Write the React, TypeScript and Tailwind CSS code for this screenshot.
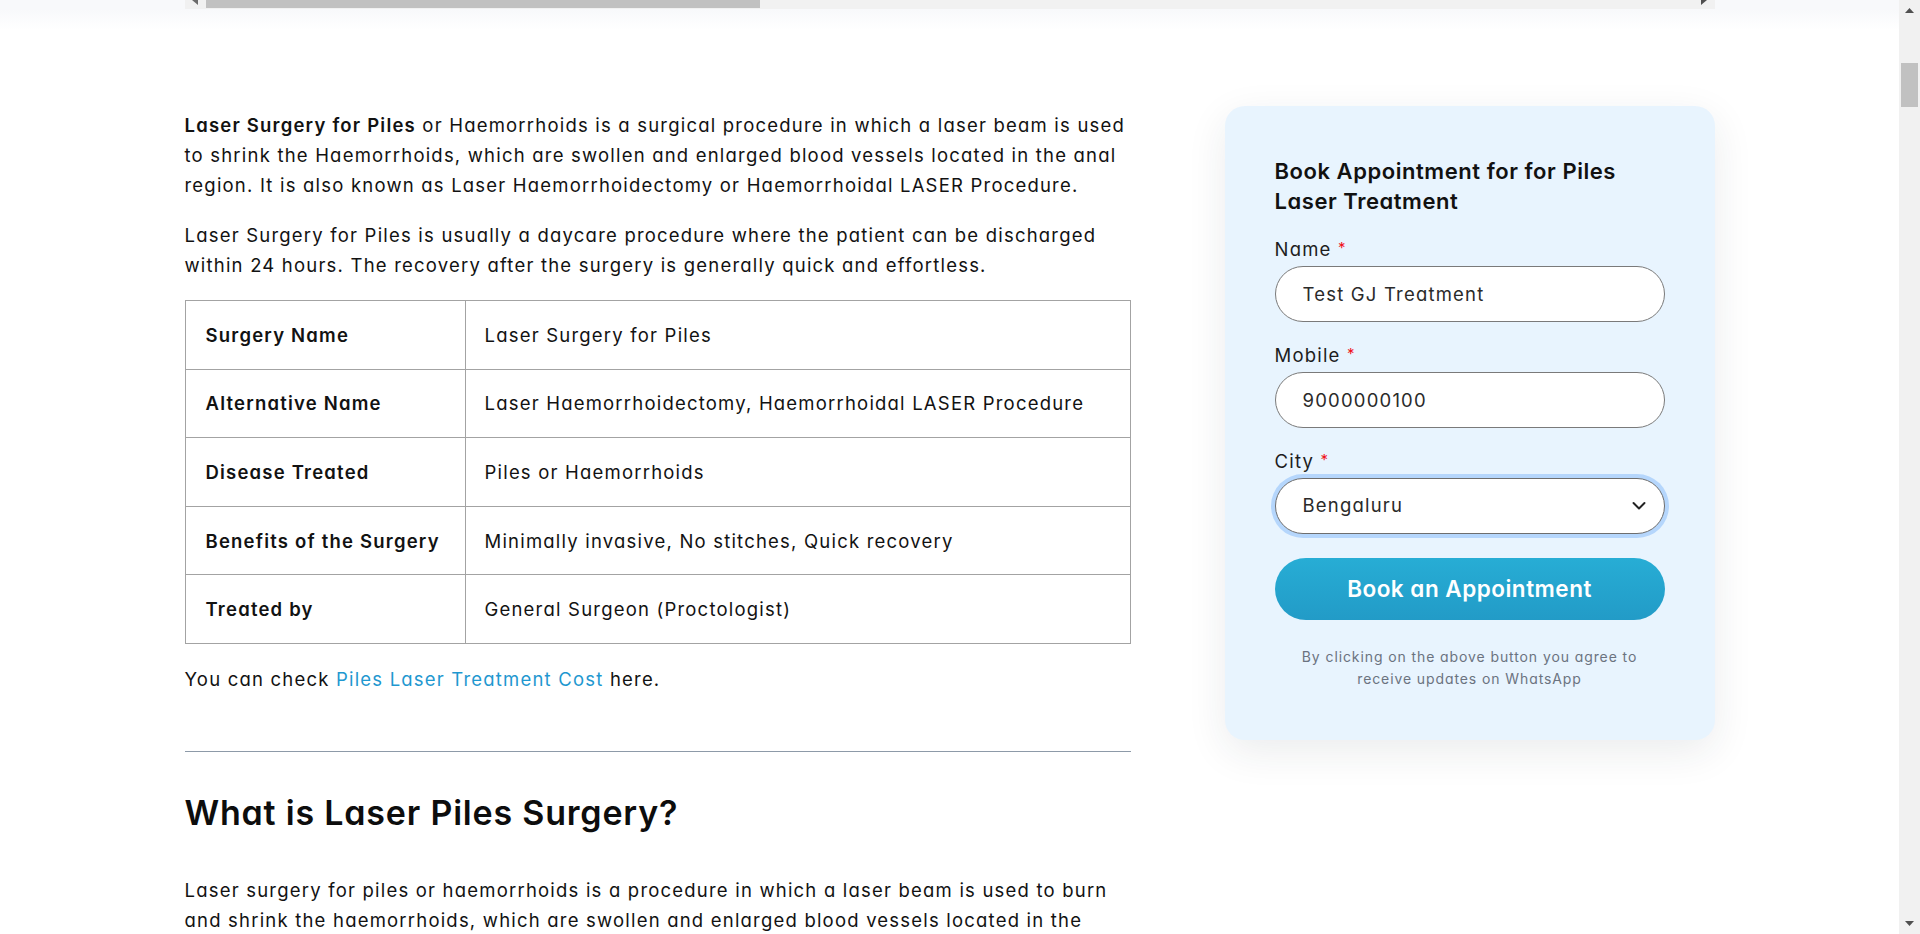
const rows = [
  { label: "Surgery Name", value: "Laser Surgery for Piles" },
  { label: "Alternative Name", value: "Laser Haemorrhoidectomy, Haemorrhoidal LASER Procedure" },
  { label: "Disease Treated", value: "Piles or Haemorrhoids" },
  { label: "Benefits of the Surgery", value: "Minimally invasive, No stitches, Quick recovery" },
  { label: "Treated by", value: "General Surgeon (Proctologist)" },
];

function TopScroller() {
  return (
    <div className="h-[10px] shrink-0 bg-[#f8f9fb]">
      <div className="w-[1530px] mx-auto h-[9px] bg-[#f1f1f1] flex items-start">
        <div className="w-[21px] h-[9px] flex items-start justify-center">
          <svg width="6" height="5" viewBox="0 0 6 5">
            <path d="M0 0 L6 0 L6 5 Z" fill="#6b6b6b" />
          </svg>
        </div>
        <div className="w-[554px] h-[8px] bg-[#c1c1c1]" />
        <div className="flex-1" />
        <div className="w-[21px] h-[9px] flex items-start justify-center">
          <svg width="6" height="5" viewBox="0 0 6 5">
            <path d="M0 0 L6 0 L0 5 Z" fill="#505050" />
          </svg>
        </div>
      </div>
    </div>
  );
}

function PageScrollbar() {
  return (
    <div className="w-[21px] h-screen bg-[#f1f1f1] flex flex-col items-center shrink-0">
      <div className="h-[21px] w-full flex items-center justify-center">
        <svg width="9" height="5" viewBox="0 0 9 5">
          <path d="M4.5 0 L9 5 L0 5 Z" fill="#505050" />
        </svg>
      </div>
      <div className="mt-[42px] w-[17px] h-[44px] bg-[#c1c1c1]" />
      <div className="flex-1" />
      <div className="h-[21px] w-full flex items-center justify-center">
        <svg width="9" height="5" viewBox="0 0 9 5">
          <path d="M0 0 L9 0 L4.5 5 Z" fill="#505050" />
        </svg>
      </div>
    </div>
  );
}

function Field({ label, children }: { label: string; children: React.ReactNode }) {
  return (
    <div className="mt-[20px]">
      <label className="block text-[18.5px] leading-[26px] tracking-[1.2px] text-[#1d1d1d] mb-[2px]">
        {label} <span className="text-[#f0121b] text-[15px] relative top-[-3px]">*</span>
      </label>
      {children}
    </div>
  );
}

function BookingCard() {
  return (
    <div className="w-[490px] mt-[76px] bg-[#e8f4fe] rounded-[20px] px-[50px] pt-[50px] pb-[50px] shadow-[0_12px_40px_rgba(30,40,60,0.09)]">
      <h3 className="text-[22px] leading-[30px] font-semibold tracking-[0.55px] text-[#111]">
        Book Appointment for for Piles Laser Treatment
      </h3>
      <Field label="Name">
        <input
          defaultValue="Test GJ Treatment"
          className="w-full h-[56px] rounded-full border border-[#7a7a7a] bg-white px-[27px] text-[18.5px] tracking-[1.2px] text-[#2a2a2a] outline-none"
        />
      </Field>
      <Field label="Mobile">
        <input
          defaultValue="9000000100"
          className="w-full h-[56px] rounded-full border border-[#7a7a7a] bg-white px-[27px] text-[18.5px] tracking-[1.2px] text-[#2a2a2a] outline-none"
        />
      </Field>
      <Field label="City">
        <div className="relative">
          <select
            defaultValue="Bengaluru"
            className="appearance-none w-full h-[56px] rounded-full border border-[#6e6e6e] bg-white pl-[27px] pr-[50px] text-[18.5px] tracking-[1.2px] text-[#2a2a2a] outline-none ring-[4px] ring-[#b5d6fc]"
          >
            <option>Bengaluru</option>
            <option>Mumbai</option>
            <option>Delhi</option>
            <option>Hyderabad</option>
          </select>
          <svg
            className="absolute right-[19px] top-1/2 -translate-y-1/2 pointer-events-none"
            width="14"
            height="9"
            viewBox="0 0 14 9"
            fill="none"
          >
            <path d="M1.5 1.5 L7 7 L12.5 1.5" stroke="#222" strokeWidth="2" strokeLinecap="round" strokeLinejoin="round" />
          </svg>
        </div>
      </Field>
      <button className="mt-[24px] w-full h-[62px] rounded-full bg-gradient-to-b from-[#27add5] to-[#229bc7] text-white text-[22.5px] font-semibold tracking-[0.5px]">
        Book an Appointment
      </button>
      <p className="mt-[26px] text-center text-[14px] leading-[22px] tracking-[0.9px] text-[#6b7380]">
        By clicking on the above button you agree to
        <br />
        receive updates on WhatsApp
      </p>
    </div>
  );
}

export default function App() {
  return (
    <div className="h-screen overflow-hidden flex bg-white text-[#121212] font-['Inter',sans-serif] [font-feature-settings:'cv11']">
      <div className="flex-1 flex flex-col min-w-0">
        <TopScroller />
        <div className="h-[20px] shrink-0 bg-gradient-to-b from-[#f8f9fb] to-white" />
        <div className="w-[1530px] shrink-0 mx-auto flex items-start justify-between">
          <div className="w-[946px] pt-[80px] text-[18.5px] leading-[30px] tracking-[1.2px]">
            <p className="mb-[20px]">
              <strong className="font-semibold">Laser Surgery for Piles</strong> or Haemorrhoids is a surgical procedure in
              which a laser beam is used to shrink the Haemorrhoids, which are swollen and enlarged blood vessels located
              in the anal region. It is also known as Laser Haemorrhoidectomy or Haemorrhoidal LASER Procedure.
            </p>
            <p className="mb-[20px]">
              Laser Surgery for Piles is usually a daycare procedure where the patient can be discharged within 24 hours.
              The recovery after the surgery is generally quick and effortless.
            </p>
            <table className="w-full border-collapse border border-[#a3a3a3]">
              <tbody>
                {rows.map((r) => (
                  <tr key={r.label} className="h-[68.6px]">
                    <td className="w-[280px] border border-[#a3a3a3] px-[20px] font-semibold">{r.label}</td>
                    <td className="border border-[#a3a3a3] px-[19px]">{r.value}</td>
                  </tr>
                ))}
              </tbody>
            </table>
            <p className="mt-[20px]">
              You can check{" "}
              <a href="#" className="text-[#1f98d0]">
                Piles Laser Treatment Cost
              </a>{" "}
              here.
            </p>
            <hr className="mt-[57px] border-0 border-t border-[#8d9aa8]" />
            <h2 className="mt-[41px] text-[34px] leading-[40px] font-semibold tracking-[0.8px] text-[#0d0d0d]">
              What is Laser Piles Surgery?
            </h2>
            <p className="mt-[42px]">
              Laser surgery for piles or haemorrhoids is a procedure in which a laser beam is used to burn and shrink the
              haemorrhoids, which are swollen and enlarged blood vessels located in the anal region.
            </p>
          </div>
          <BookingCard />
        </div>
      </div>
      <PageScrollbar />
    </div>
  );
}
